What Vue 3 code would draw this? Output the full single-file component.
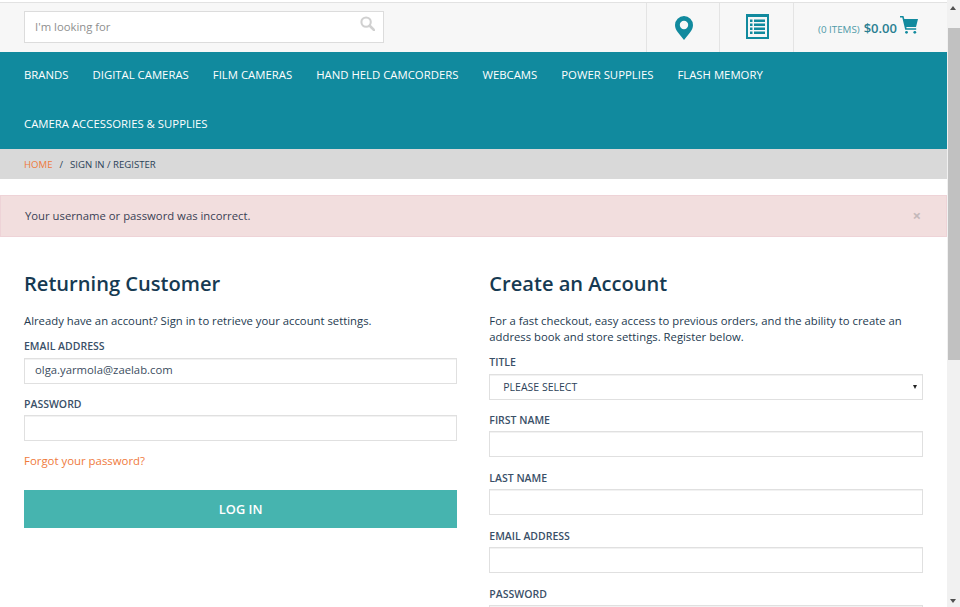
<template>
  <div class="window">
    <div class="page">
      <header class="topbar">
        <div class="search">
          <input class="search-input" type="text" placeholder="I'm looking for" />
          <svg class="search-icon" viewBox="0 0 16 16" width="15" height="15">
            <circle cx="6.500" cy="6.500" r="5" fill="none" stroke="currentColor" stroke-width="2.200" />
            <path d="M10.400 10.400L15 15" stroke="currentColor" stroke-width="2.800" stroke-linecap="round" />
          </svg>
        </div>
        <div class="tools">
          <a class="tool tool-pin">
            <svg viewBox="0 0 18 24" width="18" height="24">
              <path fill-rule="evenodd" d="M9 0a9 9 0 0 0-9 9c0 3 1.200 5 3 7.500L9 24l6-7.500C16.800 14 18 12 18 9a9 9 0 0 0-9-9zm0 4.800a4.200 4.200 0 1 1 0 8.400 4.200 4.200 0 0 1 0-8.400z" fill="currentColor" />
            </svg>
          </a>
          <a class="tool tool-list">
            <svg viewBox="0 0 23 25" width="23" height="25">
              <path fill-rule="evenodd" d="M0 0h23v25H0zM2 3v20h19V3z" fill="currentColor" />
              <path d="M4 5.500h2.500v2.500H4zM8 5.500h11v2.500H8zM4 9.500h2.500V12H4zM8 9.500h11V12H8zM4 13.500h2.500V16H4zM8 13.500h11V16H8zM4 17.500h2.500V20H4zM8 17.500h11V20H8z" fill="currentColor" />
            </svg>
          </a>
          <a class="tool-cart">
            <span class="cart-count">(0 ITEMS)</span>
            <span class="cart-total">$0.00</span>
            <svg class="cart-icon" viewBox="0 0 18 18" width="18" height="18">
              <path d="M0 0h3.500l.8 3H18l-2 8H6.300l.3 1.300h9.600v1.400H5.200L2.300 1.400H0z" fill="currentColor" />
              <circle cx="6.500" cy="16.300" r="1.400" fill="currentColor" />
              <circle cx="14.800" cy="16.300" r="1.400" fill="currentColor" />
            </svg>
          </a>
        </div>
      </header>

      <nav class="nav">
        <a v-for="item in navItems" :key="item" class="nav-item">{{ item }}</a>
      </nav>

      <div class="crumbs">
        <a class="crumb-home">HOME</a>
        <span class="crumb-sep">/</span>
        <span>SIGN IN / REGISTER</span>
      </div>

      <div class="alert">
        <span>Your username or password was incorrect.</span>
        <span class="alert-close">×</span>
      </div>

      <main class="columns">
        <section class="col">
          <h2>Returning Customer</h2>
          <p class="intro">Already have an account? Sign in to retrieve your account settings.</p>
          <label class="field">
            <span class="label">EMAIL ADDRESS</span>
            <input class="input" type="text" value="olga.yarmola@zaelab.com" />
          </label>
          <label class="field">
            <span class="label">PASSWORD</span>
            <input class="input" type="password" />
          </label>
          <a class="forgot">Forgot your password?</a>
          <button class="login" type="button">LOG IN</button>
        </section>

        <section class="col">
          <h2>Create an Account</h2>
          <p class="intro">For a fast checkout, easy access to previous orders, and the ability to create an address book and store settings. Register below.</p>
          <div class="field">
            <span class="label">TITLE</span>
            <div class="select">
              <span>PLEASE SELECT</span>
              <i class="select-arrow"></i>
            </div>
          </div>
          <label v-for="name in registerFields" :key="name" class="field">
            <span class="label">{{ name }}</span>
            <input class="input" type="text" />
          </label>
        </section>
      </main>
    </div>

    <div class="scrollbar">
      <i class="arrow-up"></i>
      <div class="thumb"></div>
      <i class="arrow-down"></i>
    </div>
  </div>
</template>

<script setup>
const navItems = [
  'BRANDS',
  'DIGITAL CAMERAS',
  'FILM CAMERAS',
  'HAND HELD CAMCORDERS',
  'WEBCAMS',
  'POWER SUPPLIES',
  'FLASH MEMORY',
  'CAMERA ACCESSORIES & SUPPLIES'
]

const registerFields = ['FIRST NAME', 'LAST NAME', 'EMAIL ADDRESS', 'PASSWORD']
</script>

<style>
html,
body {
  margin: 0;
  overflow: hidden;
}
</style>

<style scoped>
.window {
  display: flex;
  height: 607px;
  overflow: hidden;
  background: #fff;
  font-family: "Open Sans", "Liberation Sans", sans-serif;
  color: #1f3a52;
}

.page {
  flex: 1;
  min-width: 0;
  overflow: hidden;
}

.topbar {
  display: flex;
  justify-content: space-between;
  height: 49px;
  margin-top: 2px;
  border-top: 1px solid #e2e2e2;
  background: #f7f7f7;
}

.search {
  position: relative;
  width: 360px;
  height: 32px;
  margin: 8px 0 0 24px;
}

.search-input {
  box-sizing: border-box;
  width: 100%;
  height: 100%;
  padding: 0 10px 2px;
  border: 1px solid #dcdcdc;
  background: #fff;
  font: 11.300px "Open Sans", sans-serif;
  outline: none;
}

.search-input::placeholder {
  color: #8f8f8f;
  opacity: 1;
}

.search-icon {
  position: absolute;
  top: 5px;
  right: 9px;
  color: #d0d0d0;
}

.tools {
  display: flex;
}

.tool {
  display: flex;
  align-items: center;
  justify-content: center;
  box-sizing: border-box;
  width: 73px;
  border-left: 1px solid #e4e4e4;
  color: #118a9e;
}

.tool-pin svg {
  margin-left: 1px;
}

.tool-list {
  width: 74px;
}

.tool-list svg {
  margin: -3px 0 0 1px;
}

.tool-cart {
  display: flex;
  align-items: flex-start;
  box-sizing: border-box;
  width: 154px;
  padding: 14px 0 0 24px;
  border-left: 1px solid #e4e4e4;
  color: #118a9e;
}

.cart-count {
  margin-top: 6px;
  font-size: 9.800px;
  line-height: 14px;
  color: #4f9aa8;
}

.cart-total {
  margin: 2px 4px 0 4px;
  font-size: 13px;
  font-weight: 600;
  line-height: 18px;
  color: #2a7f92;
}

.cart-icon {
  margin: -1px 0 0 -1px;
}

.nav {
  display: flex;
  flex-wrap: wrap;
  column-gap: 24px;
  height: 97px;
  padding: 0 24px;
  background: #118a9e;
}

.nav-item {
  height: 48.500px;
  font-size: 11.350px;
  line-height: 46px;
  color: #fff;
}

.crumbs {
  display: flex;
  align-items: center;
  height: 30px;
  padding-left: 24px;
  background: #d9d9d9;
  font-size: 9.600px;
  color: #2c4258;
}

.crumb-home {
  color: #ef7a3c;
}

.crumb-sep {
  margin: 0 7px;
}

.alert {
  display: flex;
  align-items: center;
  justify-content: space-between;
  box-sizing: border-box;
  height: 42px;
  margin-top: 16px;
  padding: 0 25px 2px 24px;
  border: 1px solid #eed3d7;
  background: #f2dede;
  font-size: 11.300px;
  color: #3a3f55;
}

.alert-close {
  font-size: 15px;
  font-weight: 700;
  color: #c4b8ba;
}

.columns {
  display: grid;
  grid-template-columns: 433.300px 433.300px;
  column-gap: 32px;
  padding: 33px 24px 0;
}

h2 {
  margin: 0 0 15px;
  font-size: 20.100px;
  font-weight: 600;
  line-height: 28px;
  color: #163a52;
}

.intro {
  margin: 0 0 9px;
  font-size: 11.300px;
  line-height: 16px;
  color: #243a50;
}

.field {
  display: block;
  margin-bottom: 12.400px;
}

.label {
  display: block;
  margin-bottom: 3.500px;
  font-size: 10.500px;
  font-weight: 600;
  line-height: 16px;
  color: #3a5068;
}

.input {
  display: block;
  box-sizing: border-box;
  width: 100%;
  height: 26px;
  padding: 0 10px 2px;
  border: 1px solid #e0e0e0;
  box-shadow: inset 0 1px 0 #f2f2f2;
  background: #fff;
  font: 11.300px "Open Sans", sans-serif;
  color: #3b4d60;
  outline: none;
}

.select {
  display: flex;
  align-items: center;
  justify-content: space-between;
  box-sizing: border-box;
  height: 26px;
  padding: 0 5px 0 13px;
  border: 1px solid #e0e0e0;
  box-shadow: inset 0 1px 0 #f2f2f2;
  font-size: 10.500px;
  color: #2c4258;
}

.select-arrow {
  border-top: 4px solid #222;
  border-left: 2.500px solid transparent;
  border-right: 2.500px solid transparent;
}

.forgot {
  display: block;
  margin-top: -1px;
  font-size: 11.400px;
  line-height: 16px;
  color: #ef7a3c;
}

.login {
  display: block;
  width: 100%;
  height: 38px;
  margin-top: 21px;
  border: 0;
  background: #46b4af;
  font: 600 12.800px "Open Sans", sans-serif;
  color: #fff;
}

.scrollbar {
  position: relative;
  flex: none;
  width: 13px;
  background: #f1f1f1;
}

.thumb {
  position: absolute;
  top: 28px;
  left: 1px;
  right: 0;
  height: 332px;
  background: #c1c1c1;
}

.arrow-up,
.arrow-down {
  position: absolute;
  left: 3px;
  border-left: 3.500px solid transparent;
  border-right: 3.500px solid transparent;
}

.arrow-up {
  top: 6px;
  border-bottom: 4px solid #505050;
}

.arrow-down {
  bottom: 4px;
  border-top: 4px solid #505050;
}
</style>
